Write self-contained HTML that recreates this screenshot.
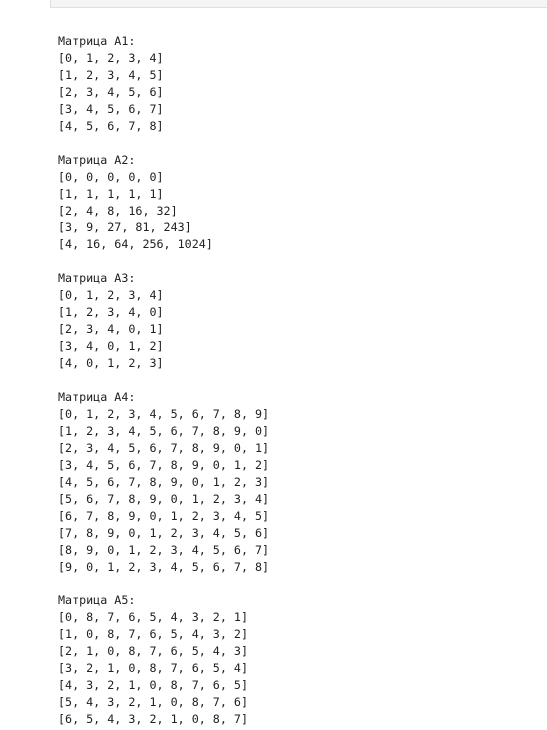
<!DOCTYPE html>
<html><head><meta charset="utf-8"><style>
html,body{margin:0;padding:0;background:#fff;width:547px;height:730px;overflow:hidden;position:relative}
.top{position:absolute;left:50px;top:-10px;width:497px;height:17px;background:#f5f5f5;border-bottom:1px solid #e0e0e0;border-left:1px solid #e0e0e0;}
.top span{position:absolute;left:7px;top:-3px;font:11.8px "Liberation Mono",monospace;color:#333}
pre{position:absolute;left:58px;top:33px;margin:0;font-family:"DejaVu Sans Mono","Liberation Mono",monospace;font-size:11.7px;line-height:16.95px;color:#212121}
</style></head><body>
<div class="top"><span>print_matrix(A5, "A5")</span></div>
<pre>Матрица A1:
[0, 1, 2, 3, 4]
[1, 2, 3, 4, 5]
[2, 3, 4, 5, 6]
[3, 4, 5, 6, 7]
[4, 5, 6, 7, 8]

Матрица A2:
[0, 0, 0, 0, 0]
[1, 1, 1, 1, 1]
[2, 4, 8, 16, 32]
[3, 9, 27, 81, 243]
[4, 16, 64, 256, 1024]

Матрица A3:
[0, 1, 2, 3, 4]
[1, 2, 3, 4, 0]
[2, 3, 4, 0, 1]
[3, 4, 0, 1, 2]
[4, 0, 1, 2, 3]

Матрица A4:
[0, 1, 2, 3, 4, 5, 6, 7, 8, 9]
[1, 2, 3, 4, 5, 6, 7, 8, 9, 0]
[2, 3, 4, 5, 6, 7, 8, 9, 0, 1]
[3, 4, 5, 6, 7, 8, 9, 0, 1, 2]
[4, 5, 6, 7, 8, 9, 0, 1, 2, 3]
[5, 6, 7, 8, 9, 0, 1, 2, 3, 4]
[6, 7, 8, 9, 0, 1, 2, 3, 4, 5]
[7, 8, 9, 0, 1, 2, 3, 4, 5, 6]
[8, 9, 0, 1, 2, 3, 4, 5, 6, 7]
[9, 0, 1, 2, 3, 4, 5, 6, 7, 8]

Матрица A5:
[0, 8, 7, 6, 5, 4, 3, 2, 1]
[1, 0, 8, 7, 6, 5, 4, 3, 2]
[2, 1, 0, 8, 7, 6, 5, 4, 3]
[3, 2, 1, 0, 8, 7, 6, 5, 4]
[4, 3, 2, 1, 0, 8, 7, 6, 5]
[5, 4, 3, 2, 1, 0, 8, 7, 6]
[6, 5, 4, 3, 2, 1, 0, 8, 7]</pre>
</body></html>
